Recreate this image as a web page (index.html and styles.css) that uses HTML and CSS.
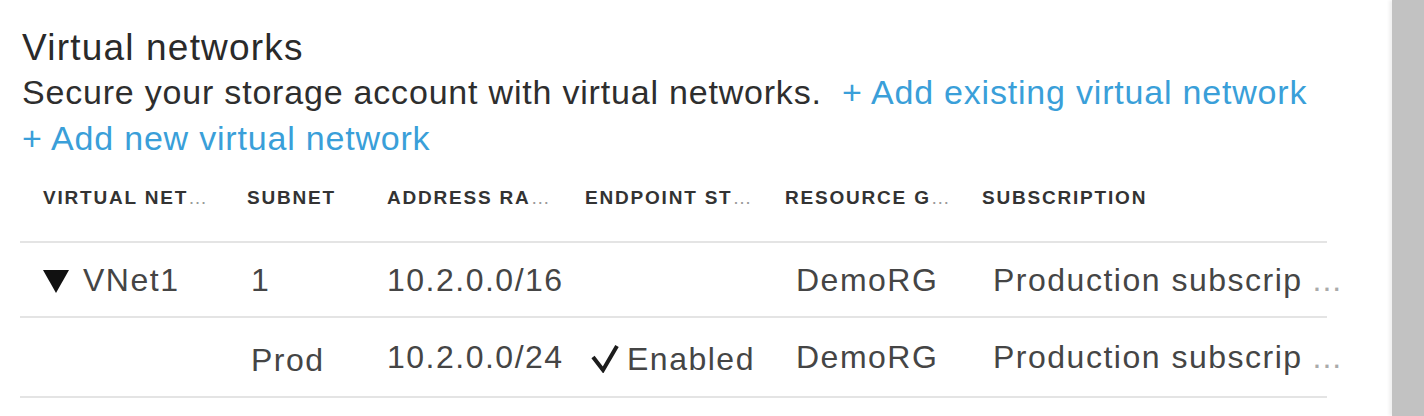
FILE: index.html
```html
<!DOCTYPE html>
<html lang="en">
<head>
<meta charset="utf-8">
<title>Virtual networks</title>
<link rel="stylesheet" href="styles.css">
</head>
<body>
<div class="page">
  <main class="content">
    <h1 class="title">Virtual networks</h1>
    <p class="desc">Secure your storage account with virtual networks. <a class="link link-gap" href="#">+ Add existing virtual network</a> <a class="link" href="#">+ Add new virtual network</a></p>

    <div class="table">
      <div class="row head">
        <div class="cell c1">VIRTUAL NET<span class="ell">…</span></div>
        <div class="cell c2">SUBNET</div>
        <div class="cell c3">ADDRESS RA<span class="ell">…</span></div>
        <div class="cell c4">ENDPOINT ST<span class="ell">…</span></div>
        <div class="cell c5">RESOURCE G<span class="ell">…</span></div>
        <div class="cell c6">SUBSCRIPTION</div>
      </div>
      <div class="row data r1">
        <div class="cell c1 icon"><svg class="caret" width="26" height="24" viewBox="0 0 26 24"><polygon points="0,1 26,1 13,24" fill="#111"/></svg>VNet1</div>
        <div class="cell c2 one">1</div>
        <div class="cell c3">10.2.0.0/16</div>
        <div class="cell c4"></div>
        <div class="cell c5 pad">DemoRG</div>
        <div class="cell c6 pad">Production subscrip<span class="more">...</span></div>
      </div>
      <div class="row data r2">
        <div class="cell c1"></div>
        <div class="cell c2 prod">Prod</div>
        <div class="cell c3">10.2.0.0/24</div>
        <div class="cell c4 icon pad-s"><svg class="check" width="28" height="29" viewBox="0 0 28 29"><polyline points="2,13 12,26 26,2" fill="none" stroke="#1c1c1c" stroke-width="4" stroke-linejoin="miter"/></svg>Enabled</div>
        <div class="cell c5 pad">DemoRG</div>
        <div class="cell c6 pad">Production subscrip<span class="more">...</span></div>
      </div>
    </div>
  </main>
  <aside class="scrollbar"></aside>
</div>
</body>
</html>
```

FILE: styles.css
```css
html, body {
  margin: 0;
  padding: 0;
  background: #ffffff;
}

body {
  font-family: "Liberation Sans", Arial, sans-serif;
  color: #333333;
}

.page {
  display: flex;
  width: 1424px;
  height: 416px;
  overflow: hidden;
}

.content {
  flex: 1;
  padding: 27px 0 0 20px;
  min-width: 0;
}

.title {
  margin: 0;
  padding-left: 2px;
  font-size: 37px;
  line-height: 42px;
  font-weight: normal;
  letter-spacing: 1.2px;
  color: #2a2a2a;
}

.desc {
  margin: 0;
  padding-left: 2px;
  width: 1345px;
  font-size: 34px;
  line-height: 46px;
  letter-spacing: 0.8px;
  color: #2e2e2e;
}

.link {
  color: #3a9fd9;
  text-decoration: none;
  white-space: nowrap;
}

.link-gap {
  margin-left: 10px;
}

.table {
  width: 1307px;
}

.row {
  display: grid;
  grid-template-columns: 227px 140px 198px 200px 197px 1fr;
  align-items: center;
  border-bottom: 2px solid #e4e4e4;
}

.cell {
  white-space: nowrap;
}

.cell.icon {
  display: flex;
  align-items: center;
}

.cell.c1 {
  padding-left: 23px;
}

.head {
  height: 80px;
  align-items: start;
}

.head .cell {
  padding-top: 26px;
  font-size: 19px;
  line-height: 22px;
  font-weight: bold;
  letter-spacing: 1.8px;
  color: #333333;
}

.ell {
  font-weight: normal;
  letter-spacing: 0;
  color: #9a9a9a;
}

.data {
  font-size: 32px;
  line-height: 40px;
  letter-spacing: 1.5px;
  color: #454545;
}

.r1 {
  height: 73px;
}

.r2 {
  height: 78px;
}

.caret {
  margin-right: 14px;
  margin-top: 2px;
  flex: none;
}

.one {
  padding-left: 4px;
}

.prod {
  padding-left: 4px;
  padding-top: 6px;
}

.pad {
  padding-left: 11px;
}

.pad-s {
  padding-left: 6px;
  padding-top: 4px;
}

.check {
  margin-right: 8px;
  margin-top: -2px;
  flex: none;
}

.more {
  color: #aaaaaa;
  margin-left: 10px;
  letter-spacing: 1px;
}

.scrollbar {
  width: 32px;
  flex: none;
  background: #c2c2c2;
  box-shadow: -3px 0 3px rgba(0, 0, 0, 0.06);
}
```
